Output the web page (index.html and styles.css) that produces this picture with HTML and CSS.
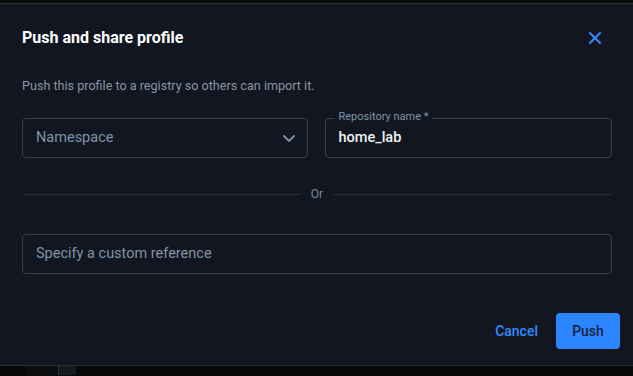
FILE: index.html
```html
<!DOCTYPE html>
<html lang="en">
<head>
<meta charset="utf-8">
<title>Push and share profile</title>
<link rel="stylesheet" href="styles.css">
</head>
<body>
<div class="topstrip"></div>
<div class="dialog">
  <div class="header">
    <h2 class="title">Push and share profile</h2>
    <button class="close" aria-label="Close">
      <svg width="12" height="12" viewBox="0 0 12 12"><path d="M1 1 L11 11 M11 1 L1 11" stroke="#2f8bff" stroke-width="2" stroke-linecap="square" fill="none"/></svg>
    </button>
  </div>
  <div class="content">
    <p class="desc">Push this profile to a registry so others can import it.</p>
    <div class="fields">
      <div class="field select">
        <span class="placeholder">Namespace</span>
        <svg class="chev" width="14" height="9" viewBox="0 0 14 9"><path d="M1.5 1.5 L7 7 L12.5 1.5" stroke="#7f94a8" stroke-width="1.8" fill="none"/></svg>
      </div>
      <div class="field outlined">
        <span class="label">Repository name *</span>
        <span class="value">home_lab</span>
      </div>
    </div>
    <div class="divider"><span class="line"></span><span class="or">Or</span><span class="line"></span></div>
    <div class="field wide">
      <span class="placeholder">Specify a custom reference</span>
    </div>
  </div>
  <div class="footer">
    <button class="btn text">Cancel</button>
    <button class="btn primary">Push</button>
  </div>
</div>
<div class="bottomstrip">
  <span class="seg s1"></span><span class="seg s2"></span><span class="seg s3"></span><span class="seg s4"></span>
</div>
</body>
</html>
```

FILE: styles.css
```css
* { box-sizing: border-box; }
html, body { margin: 0; padding: 0; }
body {
  width: 633px;
  height: 376px;
  overflow: hidden;
  background: #08090b;
  font-family: Roboto, "Liberation Sans", sans-serif;
}
.topstrip {
  height: 4px;
  background: #090a0c;
  border-bottom: 1px solid #2a2e34;
}
.dialog {
  height: 362px;
  background: #111620;
  border-bottom: 1px solid #2a2e34;
  display: flex;
  flex-direction: column;
}
.header {
  display: flex;
  align-items: center;
  justify-content: space-between;
  padding: 14px 32px 0 22px;
  height: 54px;
}
.title {
  margin: 0;
  font-size: 16px;
  font-weight: 700;
  color: #ffffff;
  line-height: 20px;
}
.close {
  background: none;
  border: 0;
  padding: 0;
  width: 12px;
  height: 12px;
  display: flex;
}
.content {
  padding: 0 21px 0 22px;
}
.desc {
  margin: 20px 0 0 0;
  font-size: 12.6px;
  line-height: 16px;
  color: #8795a3;
}
.fields {
  display: flex;
  gap: 17px;
  margin-top: 24px;
}
.field {
  position: relative;
  flex: 1;
  height: 40px;
  border: 1px solid #3a4047;
  border-radius: 4px;
  display: flex;
  align-items: center;
  padding: 0 13px 2px 13px;
}
.placeholder {
  font-size: 14.5px;
  color: #7f94a8;
}
.select { justify-content: space-between; padding-right: 11px; }
.chev { margin-top: 3px; }
.label {
  position: absolute;
  top: -9px;
  left: 9px;
  padding: 0 4px;
  background: #111620;
  font-size: 11px;
  line-height: 14px;
  color: #7f94a8;
}
.value {
  font-size: 14.5px;
  font-weight: 500;
  color: #f2f4f6;
}
.divider {
  display: flex;
  align-items: center;
  gap: 10px;
  margin-top: 26px;
  height: 20px;
}
.line {
  flex: 1;
  height: 1px;
  background: #252b33;
}
.or {
  font-size: 12px;
  color: #7b8895;
}
.wide {
  margin-top: 30px;
  flex: none;
  width: 100%;
}
.footer {
  display: flex;
  justify-content: flex-end;
  align-items: center;
  gap: 18px;
  padding: 39px 13px 0 0;
}
.btn {
  font-family: inherit;
  font-size: 14px;
  font-weight: 500;
  border: 0;
  border-radius: 4px;
  height: 36px;
  cursor: pointer;
}
.btn.text {
  background: none;
  color: #2f8bff;
  padding: 0;
}
.btn.primary {
  background: #2d86ff;
  color: #14233a;
  width: 64px;
}
.bottomstrip {
  display: flex;
  height: 9px;
}
.seg { height: 100%; }
.s1 { width: 26px; background: #060708; }
.s2 { width: 32px; background: #0c0e10; }
.s3 { width: 1px; background: #2a3136; }
.s4 { width: 17px; background: #141b1c; }
```
